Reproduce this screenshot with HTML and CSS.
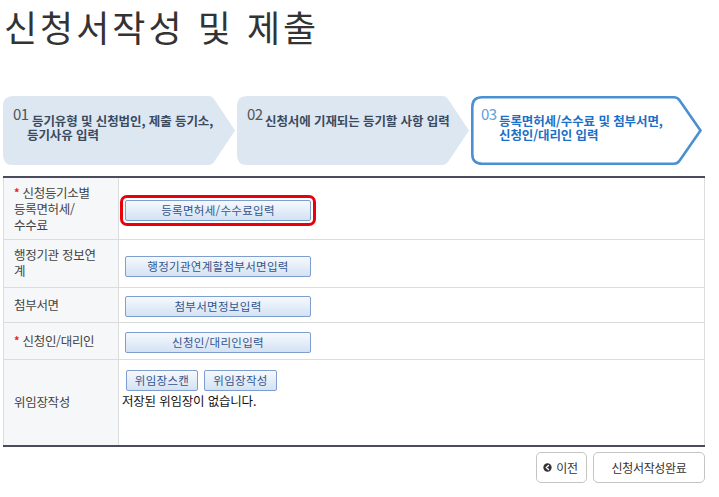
FILE: index.html
```html
<!DOCTYPE html>
<html lang="ko">
<head>
<meta charset="utf-8">
<title>신청서작성 및 제출</title>
<link rel="stylesheet" href="styles.css">
</head>
<body>
<div class="page">
  <h1 class="title">신청서작성 및 제출</h1>

  <ol class="steps">
    <li class="step step-1">
      <svg class="step-bg" viewBox="0 0 232 69" preserveAspectRatio="none" aria-hidden="true">
        <path d="M10,0 H206 Q209,0 211,3 L232,34.5 L211,66 Q209,69 206,69 H10 Q0,69 0,59 V10 Q0,0 10,0 Z" fill="#dce7f2"/>
      </svg>
      <div class="step-body">
        <span class="step-num">01</span><span class="step-text indent">등기유형 및 신청법인, 제출 등기소,<br>등기사유 입력</span>
      </div>
    </li>
    <li class="step step-2">
      <svg class="step-bg" viewBox="0 0 232 69" preserveAspectRatio="none" aria-hidden="true">
        <path d="M10,0 H206 Q209,0 211,3 L232,34.5 L211,66 Q209,69 206,69 H10 Q0,69 0,59 V10 Q0,0 10,0 Z" fill="#dce7f2"/>
      </svg>
      <div class="step-body">
        <span class="step-num">02</span><span class="step-text">신청서에 기재되는 등기할 사항 입력</span>
      </div>
    </li>
    <li class="step step-3 active">
      <svg class="step-bg" viewBox="0 0 232 69" preserveAspectRatio="none" aria-hidden="true">
        <path d="M11,1.3 H203 Q206.5,1.3 208.5,4.3 L229.5,34.5 L208.5,64.7 Q206.5,67.7 203,67.7 H11 Q1.3,67.7 1.3,58 V11 Q1.3,1.3 11,1.3 Z" fill="#ffffff" stroke="#4b91d2" stroke-width="2.6"/>
      </svg>
      <div class="step-body">
        <span class="step-num">03</span><span class="step-text">등록면허세/수수료 및 첨부서면,<br>신청인/대리인 입력</span>
      </div>
    </li>
  </ol>

  <table class="form-table">
    <tbody>
      <tr class="row-1">
        <th><span class="req">*</span> 신청등기소별<br>등록면허세/<br>수수료</th>
        <td><span class="highlight"><button class="btn btn-wide" type="button">등록면허세/수수료입력</button></span></td>
      </tr>
      <tr class="row-2">
        <th>행정기관 정보연<br>계</th>
        <td><button class="btn btn-wide" type="button">행정기관연계할첨부서면입력</button></td>
      </tr>
      <tr class="row-3">
        <th>첨부서면</th>
        <td><button class="btn btn-wide" type="button">첨부서면정보입력</button></td>
      </tr>
      <tr class="row-4">
        <th><span class="req">*</span> 신청인/대리인</th>
        <td><button class="btn btn-wide" type="button">신청인/대리인입력</button></td>
      </tr>
      <tr class="row-5">
        <th>위임장작성</th>
        <td class="top">
          <div class="btn-row">
            <button class="btn btn-small" type="button">위임장스캔</button>
            <button class="btn btn-small" type="button">위임장작성</button>
          </div>
          <p class="note">저장된 위임장이 없습니다.</p>
        </td>
      </tr>
    </tbody>
  </table>

  <div class="actions">
    <button class="act-btn act-prev" type="button">
      <svg class="prev-icon" viewBox="0 0 10 10" aria-hidden="true">
        <circle cx="5" cy="5" r="4.6" fill="#333"/>
        <path d="M6.1,2.7 L3.6,5 L6.1,7.3" fill="none" stroke="#fff" stroke-width="1.6" stroke-linecap="round" stroke-linejoin="round"/>
      </svg>
      <span>이전</span>
    </button>
    <button class="act-btn act-done" type="button">신청서작성완료</button>
  </div>
</div>
</body>
</html>
```

FILE: styles.css
```css
* {
  box-sizing: border-box;
}

html, body {
  margin: 0;
  padding: 0;
  background: #ffffff;
}

body {
  font-family: "Noto Sans CJK KR", "Noto Sans", sans-serif;
  color: #333;
}

.page {
  width: 719px;
  padding: 0 0 0 3px;
}

.title {
  margin: 0;
  padding: 5px 0 0 1px;
  height: 96px;
  font-size: 36px;
  line-height: 42px;
  font-weight: 400;
  color: #333;
  letter-spacing: 3px;
}

.steps {
  list-style: none;
  margin: 0;
  padding: 0;
  display: flex;
  gap: 2px;
  height: 69px;
}

.step {
  position: relative;
  width: 232px;
  height: 69px;
}

.step-bg {
  position: absolute;
  left: 0;
  top: 0;
  width: 100%;
  height: 100%;
}

.step-body {
  position: relative;
  display: flex;
  align-items: flex-start;
  padding: 9px 0 0 10px;
}

.step-num {
  font-size: 15px;
  line-height: 18px;
  color: #555;
  flex: none;
  width: 17px;
  letter-spacing: -0.5px;
}

.step-text {
  font-size: 12.5px;
  line-height: 14px;
  font-weight: 700;
  color: #3b4a5d;
  padding-top: 9px;
  letter-spacing: -0.1px;
  white-space: nowrap;
}

.step-1 .step-num {
  width: 14px;
}

.step-text.indent {
  text-indent: 5px;
}

.step-2 .step-text {
  padding-left: 1px;
}

.active .step-num {
  color: #62a0da;
}

.active .step-text {
  color: #1c70c6;
  padding-left: 1px;
}

.form-table {
  margin-top: 11px;
  width: 702px;
  border-collapse: collapse;
  border-top: 2px solid #4a4b5c;
  border-bottom: 2px solid #4a4b5c;
}

.form-table th,
.form-table td {
  border: 1px solid #dcdcdc;
  padding: 0;
  vertical-align: middle;
}

.form-table th {
  width: 115px;
  background: #f6f7f9;
  text-align: left;
  font-weight: 400;
  font-size: 12.5px;
  line-height: 16px;
  color: #444;
  padding-left: 10px;
  letter-spacing: -0.3px;
}

.form-table td {
  padding-left: 6px;
  background: #fff;
}

.row-1 { height: 62px; }
.row-2 { height: 48px; }
.row-3 { height: 35px; }
.row-4 { height: 37px; }
.row-5 { height: 87px; }

.row-1 th { padding-top: 1px; }
.row-1 td { padding-top: 4px; }
.row-2 td { padding-top: 2px; }
.row-3 td { padding-top: 0; }

.req {
  color: #e0262b;
  font-weight: 700;
  font-size: 11px;
  position: relative;
  top: -1px;
}

.highlight {
  display: inline-block;
  margin-left: -5px;
  padding: 2px;
  border: 3px solid #e8000b;
  border-radius: 7px;
  line-height: 0;
}

.btn {
  font-family: "Noto Sans CJK KR", "Noto Sans", sans-serif;
  font-size: 11.5px;
  line-height: 19px;
  height: 21px;
  padding: 0;
  color: #34558c;
  background: linear-gradient(#f6f9fd, #d3e2f3);
  border: 1px solid #7d9ecf;
  border-radius: 2px;
  letter-spacing: 0.3px;
  vertical-align: middle;
}

.btn-wide {
  width: 186px;
}

.btn-small {
  width: 72px;
}

.btn-small + .btn-small {
  margin-left: 2px;
  width: 73px;
}

.form-table td.top {
  vertical-align: top;
  padding-top: 10px;
  padding-left: 3px;
}

.btn-row {
  display: flex;
  gap: 4px;
  padding-left: 4px;
}

.note {
  margin: 2px 0 0 0;
  font-size: 12.5px;
  line-height: 16px;
  color: #111;
  letter-spacing: -0.2px;
}

.actions {
  display: flex;
  justify-content: flex-end;
  gap: 6px;
  padding: 5px 14px 0 0;
}

.act-btn {
  height: 31px;
  background: #fff;
  border: 1px solid #c4c4c4;
  border-radius: 5px;
  font-family: "Noto Sans CJK KR", "Noto Sans", sans-serif;
  font-size: 12px;
  color: #333;
  padding: 0;
  display: flex;
  align-items: center;
  justify-content: center;
  letter-spacing: -0.3px;
}

.act-prev {
  width: 51px;
  gap: 4px;
  padding-right: 2px;
}

.prev-icon {
  width: 9px;
  height: 9px;
}

.act-done {
  width: 112px;
}
```
